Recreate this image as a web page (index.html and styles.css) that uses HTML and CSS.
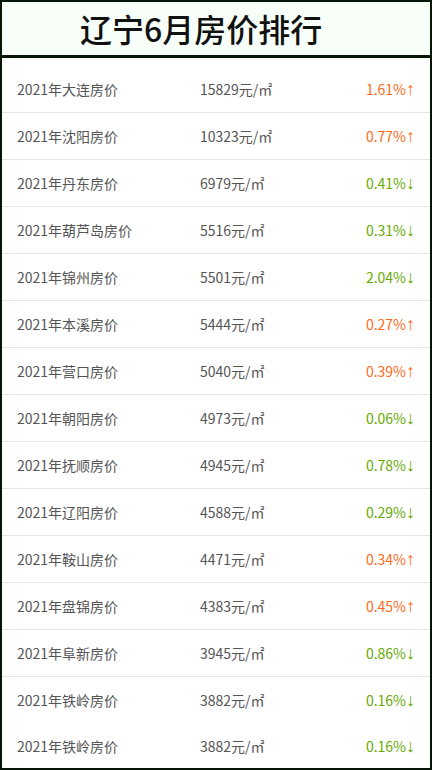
FILE: index.html
```html
<!DOCTYPE html>
<html lang="zh-CN">
<head>
<meta charset="utf-8">
<link rel="stylesheet" href="styles.css">
</head>
<body>
<div class="frame">
  <div class="title">辽宁6月房价排行</div>
  <div class="list">
    <div class="row"><span class="city">2021年大连房价</span><span class="price">15829元/㎡</span><span class="pct up">1.61%<span class="arrow">↑</span></span></div>
    <div class="row"><span class="city">2021年沈阳房价</span><span class="price">10323元/㎡</span><span class="pct up">0.77%<span class="arrow">↑</span></span></div>
    <div class="row"><span class="city">2021年丹东房价</span><span class="price">6979元/㎡</span><span class="pct down">0.41%<span class="arrow">↓</span></span></div>
    <div class="row"><span class="city">2021年葫芦岛房价</span><span class="price">5516元/㎡</span><span class="pct down">0.31%<span class="arrow">↓</span></span></div>
    <div class="row"><span class="city">2021年锦州房价</span><span class="price">5501元/㎡</span><span class="pct down">2.04%<span class="arrow">↓</span></span></div>
    <div class="row"><span class="city">2021年本溪房价</span><span class="price">5444元/㎡</span><span class="pct up">0.27%<span class="arrow">↑</span></span></div>
    <div class="row"><span class="city">2021年营口房价</span><span class="price">5040元/㎡</span><span class="pct up">0.39%<span class="arrow">↑</span></span></div>
    <div class="row"><span class="city">2021年朝阳房价</span><span class="price">4973元/㎡</span><span class="pct down">0.06%<span class="arrow">↓</span></span></div>
    <div class="row"><span class="city">2021年抚顺房价</span><span class="price">4945元/㎡</span><span class="pct down">0.78%<span class="arrow">↓</span></span></div>
    <div class="row"><span class="city">2021年辽阳房价</span><span class="price">4588元/㎡</span><span class="pct down">0.29%<span class="arrow">↓</span></span></div>
    <div class="row"><span class="city">2021年鞍山房价</span><span class="price">4471元/㎡</span><span class="pct up">0.34%<span class="arrow">↑</span></span></div>
    <div class="row"><span class="city">2021年盘锦房价</span><span class="price">4383元/㎡</span><span class="pct up">0.45%<span class="arrow">↑</span></span></div>
    <div class="row"><span class="city">2021年阜新房价</span><span class="price">3945元/㎡</span><span class="pct down">0.86%<span class="arrow">↓</span></span></div>
    <div class="row last"><span class="city">2021年铁岭房价</span><span class="price">3882元/㎡</span><span class="pct down">0.16%<span class="arrow">↓</span></span></div>
    <div class="row last"><span class="city">2021年铁岭房价</span><span class="price">3882元/㎡</span><span class="pct down">0.16%<span class="arrow">↓</span></span></div>
  </div>
</div>
</body>
</html>
```

FILE: styles.css
```css
html, body {
  margin: 0;
  padding: 0;
  background: #ffffff;
}

.frame {
  box-sizing: border-box;
  width: 432px;
  height: 770px;
  border: 2px solid #061606;
  overflow: hidden;
  background: #ffffff;
  font-family: "Noto Sans CJK SC", "Noto Sans", sans-serif;
}

.title {
  box-sizing: border-box;
  height: 56px;
  padding-left: 78px;
  background: #f8fff8;
  border-bottom: 3px solid #061606;
  font-size: 32px;
  font-weight: 500;
  color: #111111;
  line-height: 53px;
}

.list {
  padding-top: 8px;
}

.row {
  display: grid;
  grid-template-columns: 183px 1fr auto;
  align-items: center;
  height: 46px;
  padding: 0 15px 0 15px;
  border-bottom: 1px solid #e6e6e6;
  font-size: 14px;
  line-height: 20px;
  color: #555555;
}

.row.last {
  border-bottom: none;
}

.arrow {
  font-family: "Liberation Sans", "DejaVu Sans", sans-serif;
  font-size: 18px;
  line-height: 14px;
}

.pct.up {
  color: #ff6a1a;
}

.pct.down {
  color: #66aa00;
}
```
